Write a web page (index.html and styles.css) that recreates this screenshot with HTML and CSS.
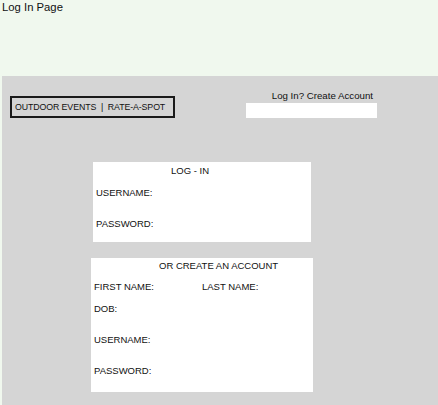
FILE: index.html
```html
<!DOCTYPE html>
<html>
<head>
<title>Log In Page</title>
<link rel="stylesheet" href="styles.css">
</head>
<body>
<div class="header">Log In Page</div>
<div class="panel">
    <div class="toprow">
        <div class="logo">OUTDOOR EVENTS &nbsp;|&nbsp; RATE-A-SPOT</div>
        <div class="account">
            <div class="account-text">Log In? Create Account</div>
            <div class="account-bar"></div>
        </div>
    </div>

    <div class="card login">
        <div class="card-title">LOG - IN</div>
        <div class="field user">USERNAME:</div>
        <div class="field pass">PASSWORD:</div>
    </div>

    <div class="card create">
        <div class="card-title">OR CREATE AN ACCOUNT</div>
        <div class="names">
            <div class="field">FIRST NAME:</div>
            <div class="field">LAST NAME:</div>
        </div>
        <div class="field dob">DOB:</div>
        <div class="field user">USERNAME:</div>
        <div class="field pass">PASSWORD:</div>
    </div>
</div>
</body>
</html>
```

FILE: styles.css
```css
* {
    margin: 0;
    padding: 0;
    box-sizing: border-box;
}

html, body {
    height: 100%;
}

body {
    background: #f0f8ee;
    font-family: "Liberation Sans", Arial, sans-serif;
    color: #111;
    display: flex;
    flex-direction: column;
}

.header {
    height: 76px;
    font-size: 11.3px;
    line-height: 14px;
    padding-left: 2px;
}

.panel {
    flex: 1;
    margin-left: 2px;
    background: #d5d5d5;
    padding: 14px 0 0 8px;
}

.toprow {
    display: flex;
    align-items: flex-start;
}

.logo {
    margin-top: 6px;
    width: 165px;
    height: 22px;
    border: 2px solid #1a1a1a;
    font-size: 8.8px;
    line-height: 18px;
    padding-left: 3px;
    white-space: nowrap;
    letter-spacing: -0.1px;
}

.account {
    margin-left: 71px;
    width: 131px;
}

.account-text {
    font-size: 9.7px;
    line-height: 11px;
    text-align: right;
    padding-right: 4px;
    white-space: nowrap;
}

.account-bar {
    margin-top: 2px;
    height: 15px;
    background: #fff;
}

.card {
    background: #fff;
    font-size: 9.5px;
    line-height: 11px;
}

.card .field {
    white-space: nowrap;
}

.login {
    margin: 44px 0 0 83px;
    width: 218px;
    height: 80px;
    padding: 3px 0 0 3px;
}

.login .card-title {
    padding-left: 75px;
}

.login .user {
    margin-top: 11px;
}

.login .pass {
    margin-top: 20px;
}

.create {
    margin: 16px 0 0 81px;
    width: 222px;
    height: 134px;
    padding: 2px 0 0 3px;
}

.create .card-title {
    padding-left: 65px;
}

.names {
    display: flex;
    margin-top: 10px;
}

.names .field:first-child {
    width: 108px;
}

.create .dob {
    margin-top: 11px;
}

.create .user {
    margin-top: 20px;
}

.create .pass {
    margin-top: 20px;
}
```
